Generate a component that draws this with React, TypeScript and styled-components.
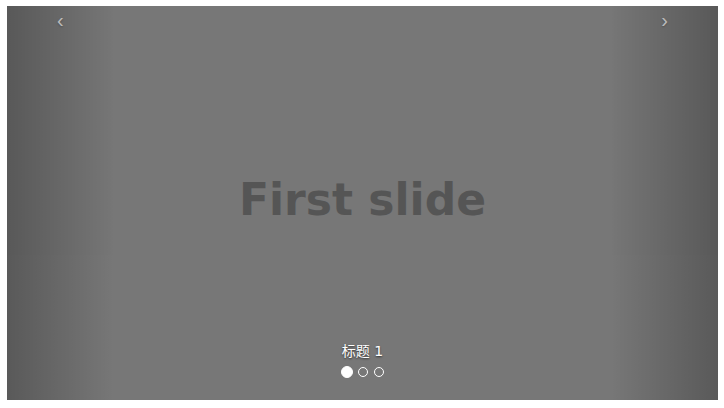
import * as React from 'react';
import styled, { createGlobalStyle } from 'styled-components';

const GlobalStyle = createGlobalStyle`
  html, body {
    margin: 0;
    padding: 0;
    background: #fff;
  }
  body {
    font-family: "DejaVu Sans", "Noto Sans CJK SC", sans-serif;
    font-size: 14px;
    line-height: 1.428571;
    color: #333;
  }
`

const Page = styled.div`
  padding: 6px 6px 0 7px;
`

const Carousel = styled.div`
  position: relative;
  width: 711px;
  height: 394px;
  overflow: hidden;
`

const Slide = styled.div`
  display: flex;
  align-items: center;
  justify-content: center;
  width: 100%;
  height: 100%;
  background: #777;
`

const SlideText = styled.span`
  font-family: "DejaVu Sans", sans-serif;
  font-weight: bold;
  font-size: 44px;
  line-height: 1;
  color: #555;
  margin-top: -6px;
`

const Control = styled.a<{ side: 'left' | 'right' }>`
  position: absolute;
  top: 0;
  bottom: 0;
  ${p => p.side}: 0;
  width: 15%;
  font-family: "Liberation Sans", sans-serif;
  font-size: 20px;
  color: #fff;
  text-align: center;
  text-decoration: none;
  text-shadow: 0 1px 2px rgba(0, 0, 0, 0.6);
  opacity: 0.5;
  cursor: pointer;
  background-image: linear-gradient(
    ${p => (p.side === 'left' ? 'to right' : 'to left')},
    rgba(0, 0, 0, 0.5) 0,
    rgba(0, 0, 0, 0.0001) 100%
  );
`

const Caption = styled.div`
  position: absolute;
  left: 15%;
  right: 15%;
  bottom: 39px;
  color: #fff;
  text-align: center;
  font-family: "DejaVu Sans", "Noto Sans CJK SC", sans-serif;
  font-size: 14px;
  line-height: 20px;
  text-shadow: 0 1px 2px rgba(0, 0, 0, 0.6);
`

const Indicators = styled.ol`
  position: absolute;
  left: 0;
  right: 0;
  bottom: 22px;
  margin: 0;
  padding: 0;
  list-style: none;
  display: flex;
  justify-content: center;
  align-items: center;
  gap: 4px;
`

const Dot = styled.li<{ active?: boolean }>`
  box-sizing: border-box;
  width: ${p => (p.active ? 12 : 10)}px;
  height: ${p => (p.active ? 12 : 10)}px;
  margin: ${p => (p.active ? 0 : 1)}px;
  border: 1px solid #fff;
  border-radius: 50%;
  background: ${p => (p.active ? '#fff' : 'rgba(0, 0, 0, 0)')};
  cursor: pointer;
`

export default function App() {
  const [active, setActive] = React.useState(0);
  const slides = ['First slide', 'Second slide', 'Third slide'];

  return (
    <Page>
      <GlobalStyle />
      <Carousel>
        <Slide>
          <SlideText>{slides[active]}</SlideText>
        </Slide>
        <Control side='left' onClick={() => setActive((active + 2) % 3)}>‹</Control>
        <Control side='right' onClick={() => setActive((active + 1) % 3)}>›</Control>
        <Caption>标题 {active + 1}</Caption>
        <Indicators>
          {slides.map((s, i) => (
            <Dot key={s} active={i === active} onClick={() => setActive(i)} />
          ))}
        </Indicators>
      </Carousel>
    </Page>
  )
}
